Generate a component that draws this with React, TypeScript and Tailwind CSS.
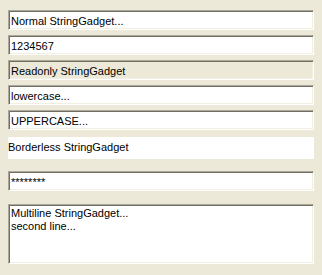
const sunken =
  "border border-t-[#aca899] border-l-[#aca899] border-r-white border-b-white shadow-[inset_1px_1px_0_#716f64,inset_-1px_-1px_0_#f1efe2]";

const Field = ({ text, readOnly }: { text: string; readOnly?: boolean }) => {
  return (
    <div
      className={`h-5 px-[2px] pt-[2px] leading-[16px] whitespace-nowrap overflow-hidden ${sunken} ${
        readOnly ? "bg-[#ece9d8]" : "bg-white"
      }`}
    >
      {text}
    </div>
  );
};

const App = () => {
  return (
    <div
      className="w-[322px] h-[275px] bg-[#ece9d8] px-2 pt-[10px] text-[11px] text-black flex flex-col"
      style={{ fontFamily: '"Liberation Sans", Arial, sans-serif' }}
    >
      <div className="flex flex-col gap-[5px]">
        <Field text="Normal StringGadget..." />
        <Field text="1234567" />
        <Field text="Readonly StringGadget" readOnly />
        <Field text="lowercase..." />
        <Field text="UPPERCASE..." />
      </div>

      <div className="mt-[7px] h-[22px] bg-white pt-[2px] leading-[16px] whitespace-nowrap">
        Borderless StringGadget
      </div>

      <div className={`mt-[12px] h-5 bg-white px-[2px] pt-[2px] leading-[16px] ${sunken}`}>
        ********
      </div>

      <div className={`mt-[13px] h-[60px] bg-white px-[2px] pt-[2px] leading-[13px] ${sunken}`}>
        <div>Multiline StringGadget...</div>
        <div>second line...</div>
      </div>
    </div>
  );
};

export default App;
